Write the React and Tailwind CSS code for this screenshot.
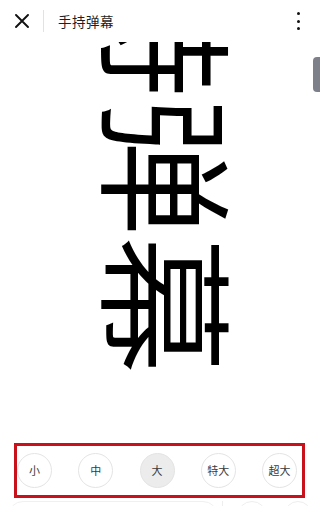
import React, { useState } from 'react';

const SIZES = ['小', '中', '大', '特大', '超大'];

const cjk = { fontFamily: '"Noto Sans CJK SC", "Noto Sans", sans-serif' };

function Header() {
	return (
		<div className="h-[42px] shrink-0 flex items-center bg-white relative z-10">
			<button type="button" className="w-[43px] h-full flex items-center justify-center pl-[1px]">
				<svg width="14" height="14" viewBox="0 0 14 14" fill="none" stroke="#111" strokeWidth="1.9" strokeLinecap="round">
					<path d="M1 1L13 13M13 1L1 13" />
				</svg>
			</button>
			<div className="w-px h-[22px] bg-[#e2e2e2]" />
			<h1 className="ml-[14px] text-[13.5px] text-[#1f1f1f] tracking-[0.5px]" style={cjk}>手持弹幕</h1>
			<div className="ml-auto mr-[20px] flex flex-col gap-[4.5px] items-center">
				<span className="w-[3px] h-[3px] rounded-full bg-[#111]" />
				<span className="w-[3px] h-[3px] rounded-full bg-[#111]" />
				<span className="w-[3px] h-[3px] rounded-full bg-[#111]" />
			</div>
		</div>
	);
}

export default function App() {
	const [size, setSize] = useState('大');

	return (
		<div className="w-[320px] h-[506px] bg-white flex flex-col overflow-hidden relative">
			<Header />

			<div className="h-[394px] shrink-0 relative overflow-hidden flex justify-center">
				<p
					className="-mt-[220px] ml-[26px] text-[138px] font-[350] leading-none text-black [writing-mode:vertical-rl] [text-orientation:sideways] whitespace-nowrap"
					style={cjk}
				>
					手持弹幕
				</p>
				<div className="absolute right-0 top-[15px] w-[7px] h-[35px] rounded-l-[4px] bg-[#7e8089]" />
			</div>

			<div className="shrink-0 px-[15px] pt-[7px]">
				<div className="h-[55px] border-[3px] border-[#c8111b] flex items-center justify-between pr-[5px] -ml-[1px]">
					{SIZES.map((label) => (
						<button
							key={label}
							type="button"
							onClick={() => setSize(label)}
							className={`w-[35px] h-[35px] rounded-full border border-[#e4e4e4] flex items-center justify-center text-[11px] text-[#3a3a3a] ${size === label ? 'bg-[#ececec]' : 'bg-white'}`}
							style={cjk}
						>
							{label}
						</button>
					))}
				</div>
			</div>

			<div className="shrink-0 h-[8px] overflow-hidden flex items-start px-[8px] pt-[3px] gap-[4px]">
				<div className="w-[210px] h-[30px] shrink-0 rounded-full border border-[#f0f0f0]" />
				<div className="w-px h-[30px] shrink-0 bg-[#eeeeee]" />
				<div className="ml-[10px] w-[30px] h-[30px] shrink-0 rounded-full border border-[#eeeeee]" />
				<div className="ml-[13px] w-[28px] h-[30px] shrink-0 rounded-full border border-[#eeeeee]" />
			</div>
		</div>
	);
}
